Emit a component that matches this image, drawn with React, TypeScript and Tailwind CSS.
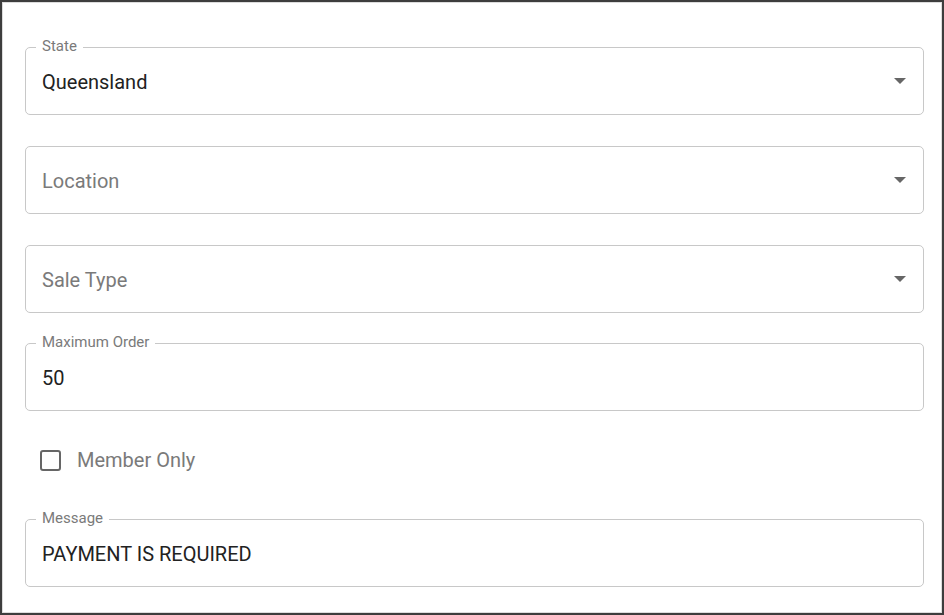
import React from "react";

function Arrow() {
  return (
    <svg width="12" height="6" viewBox="0 0 12 6" className="absolute right-[17px] top-1/2 -translate-y-1/2">
      <path d="M0 0 L12 0 L6 6 Z" fill="#666" />
    </svg>
  );
}

function Field({ label, value, placeholder, select }: { label?: string; value?: string; placeholder?: string; select?: boolean }) {
  return (
    <div className="relative h-[68px] rounded-[5px] border border-[#c8c8c8] flex items-center pl-[16px] pt-[1px]">
      {label && (
        <span className="absolute left-[10px] top-[-10px] bg-white px-[6px] text-[15px] leading-[17px] text-[#7a7a7a]">
          {label}
        </span>
      )}
      {value ? (
        <span className="text-[20px] text-[#222]">{value}</span>
      ) : (
        <span className="text-[20px] text-[#7a7a7a]">{placeholder}</span>
      )}
      {select && <Arrow />}
    </div>
  );
}

export default function App() {
  return (
    <div
      className="h-[615px] w-[944px] border-2 border-[#3d3d3d] shadow-[inset_0_0_0_1px_#dcdcdc] bg-white pl-[23px] pr-[18px] pt-[45px]"
      style={{ fontFamily: "Roboto, 'Liberation Sans', sans-serif" }}
    >
      <div className="flex flex-col">
        <Field label="State" value="Queensland" select />
        <div className="h-[31px]" />
        <Field placeholder="Location" select />
        <div className="h-[31px]" />
        <Field placeholder="Sale Type" select />
        <div className="h-[30px]" />
        <Field label="Maximum Order" value="50" />
        <div className="flex h-[38px] items-center mt-[30px] pl-[15px]">
          <div className="h-[21px] w-[21px] rounded-[3px] border-2 border-[#666]" />
          <span className="ml-[16px] text-[20px] text-[#7a7a7a]">Member Only</span>
        </div>
        <div className="h-[40px]" />
        <Field label="Message" value="PAYMENT IS REQUIRED" />
      </div>
    </div>
  );
}
